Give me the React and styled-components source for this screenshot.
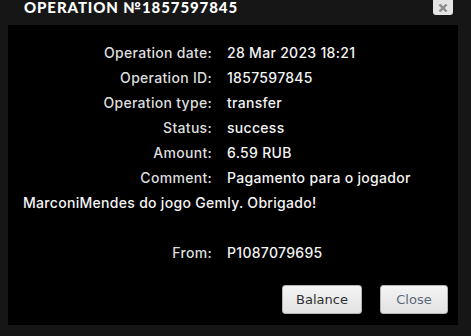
import React from 'react';
import styled, { createGlobalStyle } from 'styled-components';

const Global = createGlobalStyle`
  html, body {
    margin: 0;
    padding: 0;
    background: #161616;
  }
`;

const Dialog = styled.div`
  width: 450px;
  margin-left: 8px;
  display: flex;
  flex-direction: column;
`;

const TitleBar = styled.div`
  height: 25px;
  display: flex;
  align-items: flex-start;
  justify-content: space-between;
  padding: 0 5px 0 16px;
`;

const Title = styled.div`
  font-family: Lato, 'DejaVu Sans', sans-serif;
  font-weight: 900;
  font-size: 15px;
  line-height: 14px;
  letter-spacing: 0.9px;
  color: #ffffff;
`;

const CloseIcon = styled.button`
  width: 20px;
  height: 15px;
  border: none;
  padding: 0;
  background: #e4e4e4;
  border-radius: 0 0 3px 3px;
  display: flex;
  align-items: center;
  justify-content: center;
`;

const Panel = styled.div`
  background: #000;
  height: 300px;
  box-sizing: border-box;
  padding: 15px 10px 0 15px;
  display: flex;
  flex-direction: column;
`;

const Details = styled.div`
  font-family: Inter, 'Open Sans', sans-serif;
  font-weight: 500;
  font-size: 14px;
  line-height: 25px;
  letter-spacing: 0.3px;
  color: #f4f4f4;
`;

const Row = styled.div``;

const Label = styled.span`
  display: inline-block;
  width: 189px;
  margin-right: 15px;
  text-align: right;
  color: #dedede;
`;

const Buttons = styled.div`
  display: flex;
  justify-content: flex-end;
  gap: 18px;
  margin-top: 20px;
`;

const Button = styled.button`
  height: 29px;
  width: ${(p) => p.$w}px;
  border: 1px solid #b4b4b4;
  border-radius: 3px;
  background: linear-gradient(#f4f4f4, #e2e2e2);
  font-family: 'DejaVu Sans', Verdana, sans-serif;
  font-size: 13px;
  color: ${(p) => p.$color};
  padding: 0;
`;

const rows = [
  ['Operation date:', '28 Mar 2023 18:21'],
  ['Operation ID:', '1857597845'],
  ['Operation type:', 'transfer'],
  ['Status:', 'success'],
  ['Amount:', '6.59 RUB'],
  ['Comment:', 'Pagamento para o jogador MarconiMendes do jogo Gemly. Obrigado!'],
];

export default function App() {
  return (
    <>
      <Global />
      <Dialog>
        <TitleBar>
          <Title>OPERATION №1857597845</Title>
          <CloseIcon aria-label="close">
            <svg width="10" height="10" viewBox="0 0 10 10">
              <path d="M1.5 1.5 L8.5 8.5 M8.5 1.5 L1.5 8.5" stroke="#8a8a8a" strokeWidth="2.4" />
            </svg>
          </CloseIcon>
        </TitleBar>
        <Panel>
          <Details>
            {rows.map(([label, value]) => (
              <Row key={label}>
                <Label>{label}</Label>
                {value}
              </Row>
            ))}
            <Row>&nbsp;</Row>
            <Row>
              <Label>From:</Label>
              P1087079695
            </Row>
          </Details>
          <Buttons>
            <Button $w={80} $color="#2e2e2e">Balance</Button>
            <Button $w={68} $color="#5a6878">Close</Button>
          </Buttons>
        </Panel>
      </Dialog>
    </>
  );
}
